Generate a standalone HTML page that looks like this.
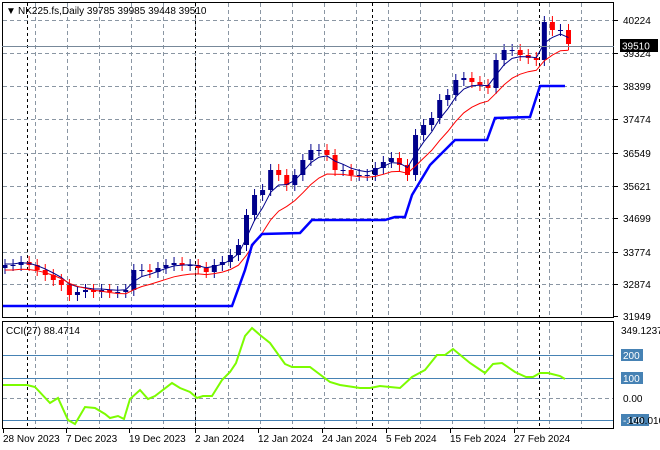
<!DOCTYPE html>
<html><head><style>
body{margin:0;background:#fff;width:660px;height:450px;overflow:hidden;font-family:"Liberation Sans",sans-serif}
svg{display:block}
text{font-family:"Liberation Sans",sans-serif;font-size:10px;fill:#000}
</style></head><body>
<svg id="s" width="660" height="450" xmlns="http://www.w3.org/2000/svg">
<rect width="660" height="450" fill="#fff"/>
<g id="grid"></g>
<g id="main"></g>
<rect x="2.5" y="2.5" width="611" height="315" fill="none" stroke="#000"/>
<rect x="2.5" y="321.5" width="611" height="107" fill="none" stroke="#000"/>
<line x1="2" y1="46.5" x2="614" y2="46.5" stroke="#778899"/>
<text x="6" y="14" style="font-size:10px">▼</text>
<text x="18" y="14" fill="#000">NK225.fs,Daily  39785 39985 39448 39510</text>
<text x="6" y="334">CCI(27) 88.4714</text>
<g id="axis"></g>
<rect x="620" y="39" width="38" height="13" fill="#000"/>
<text x="622" y="49.5" style="fill:#fff">39510</text>
</svg>
<script>
const NS="http://www.w3.org/2000/svg";
function el(p,t,a){const e=document.createElementNS(NS,t);for(const k in a)e.setAttribute(k,a[k]);p.appendChild(e);return e;}
const g=document.getElementById('grid'),m=document.getElementById('main'),ax=document.getElementById('axis');
for(let x=35;x<612;x+=32.1){let xx=Math.round(x)+.5;
 el(g,'line',{x1:xx,y1:3,x2:xx,y2:317,stroke:'#8a96a3','stroke-dasharray':'4,3'});
 el(g,'line',{x1:xx,y1:322,x2:xx,y2:428,stroke:'#8a96a3','stroke-dasharray':'4,3'});}
[27,195,372,539].forEach(x=>{el(g,'line',{x1:x+.5,y1:3,x2:x+.5,y2:428,stroke:'#000','stroke-dasharray':'3,3'});});
const lv=[[20,'40224'],[53,'39324'],[86,'38399'],[119,'37474'],[153,'36549'],[186,'35621'],[218,'34699'],[252,'33774'],[284,'32874'],[316,'31949']];
lv.forEach(([y,t])=>{ if(y<316) el(g,'line',{x1:3,y1:y+.5,x2:613,y2:y+.5,stroke:'#8a96a3','stroke-dasharray':'4,3'});
 el(ax,'line',{x1:614,y1:y+.5,x2:618,y2:y+.5,stroke:'#000'});
 const e=el(ax,'text',{x:623,y:y+4});e.textContent=t;});
[[355,'200'],[378,'100'],[420,'-100']].forEach(([y,t])=>{el(g,'line',{x1:3,y1:y+.5,x2:613,y2:y+.5,stroke:'#4682b4'});
 el(ax,'rect',{x:621,y:y-6,width:t.length*6+4,height:12,fill:'#4682b4'});
 const e=el(ax,'text',{x:623,y:y+4,style:'fill:#fff'});e.textContent=t;});
el(g,'line',{x1:3,y1:398.5,x2:613,y2:398.5,stroke:'#8a96a3','stroke-dasharray':'4,3'});
let e=el(ax,'text',{x:623,y:402});e.textContent='0.00';
e=el(ax,'text',{x:621,y:334});e.textContent='349.1237';
e=el(ax,'text',{x:628,y:424});e.textContent='140.010';
[[3,'28 Nov 2023'],[66,'7 Dec 2023'],[129,'19 Dec 2023'],[195,'2 Jan 2024'],[258,'12 Jan 2024'],[322,'24 Jan 2024'],[386,'5 Feb 2024'],[450,'15 Feb 2024'],[514,'27 Feb 2024']].forEach(([x,t])=>{
 el(ax,'line',{x1:x+.5,y1:429,x2:x+.5,y2:433,stroke:'#000'});const e=el(ax,'text',{x:x,y:442});e.textContent=t;});
const c=[265,265,262,265,270,275,280,285,295,292,290,292,290,292,292,290,270,270,272,268,265,263,265,265,268,272,265,262,255,245,215,195,190,170,175,185,175,160,150,150,155,170,170,175,175,175,168,162,158,165,175,135,125,118,100,95,80,78,82,85,88,60,50,50,55,58,60,22,30,30,44];
let ema1=[],ema2=[],a=c[0],b=c[0];
c.forEach((v,i)=>{a=a+(v-a)*0.4;b=b+(v-b)*0.22;ema1.push(a);ema2.push(b);});
let p1='',p2='';
c.forEach((cl,i)=>{const x=5+i*8.05;const op=i?c[i-1]:cl+3;const up=cl<=op;const col=up?'#00008b':'#ff0000';
 const top=Math.min(op,cl),bot=Math.max(op,cl);
 el(m,'line',{x1:x,y1:top-6,x2:x,y2:bot+6,stroke:col});
 el(m,'rect',{x:x-2.5,y:top,width:5,height:Math.max(1,bot-top),fill:col});
 p1+=(i?'L':'M')+x+','+(ema1[i]-1).toFixed(1);p2+=(i?'L':'M')+x+','+(ema2[i]+5).toFixed(1);});
el(m,'path',{d:p1,fill:'none',stroke:'#00008b'});
el(m,'path',{d:p2,fill:'none',stroke:'#ff0000'});
el(m,'path',{d:'M3,306L232,306L245,270L252,245L262,234L300,233L312,220L385,220L395,217L405,217L412,195L430,165L445,150L455,140L487,140L495,118L530,117L540,86L565,86',fill:'none',stroke:'#0000ff','stroke-width':2.5});
el(m,'path',{d:'M3,385L27,385L35,387L50,403L58,398L68,420L75,424L85,407L95,408L105,414L110,418L118,416L124,419L130,399L140,390L148,399L155,396L172,383L180,388L190,392L197,398L203,396L212,396L222,380L230,372L236,363L245,336L252,328L260,335L270,343L285,364L292,367L310,367L330,382L340,385L360,388L370,388L380,386L390,387L400,388L412,377L425,370L437,355L445,355L453,349L470,363L485,373L493,364L502,363L515,372L526,377L533,377L540,373L548,373L560,376L565,379',fill:'none',stroke:'#7cfc00','stroke-width':2});
</script>
</body></html>
